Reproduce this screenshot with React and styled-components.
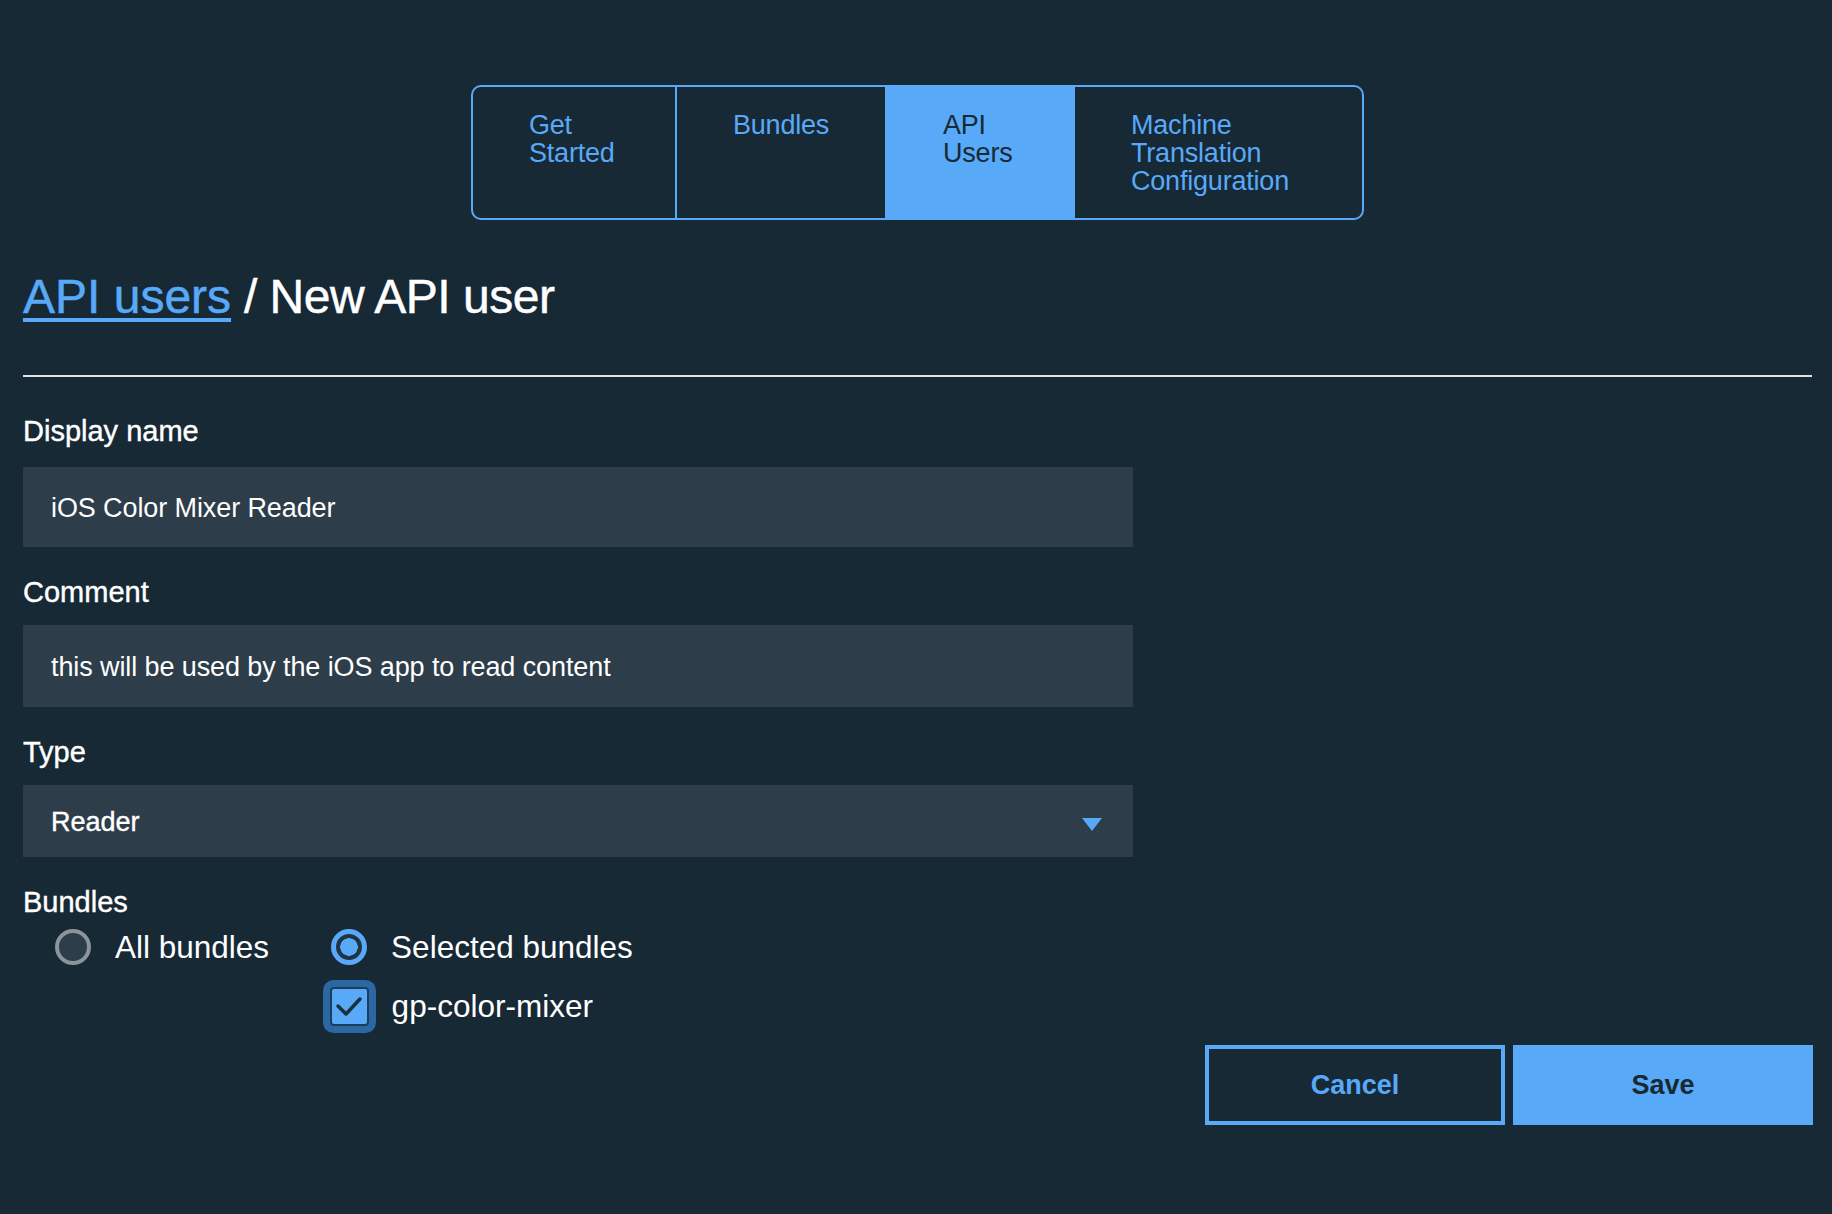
import styled, { createGlobalStyle } from "styled-components";

const BLUE = "#58a9f8";
const BG = "#172935";
const FIELD = "#2d3d4a";

const GlobalStyle = createGlobalStyle`
  html, body {
    margin: 0;
    padding: 0;
    background: ${BG};
  }
  body {
    font-family: "Liberation Sans", Arial, sans-serif;
    color: #fafafa;
  }
`;

const tabs = [
  { label: "Get\nStarted", width: 202 },
  { label: "Bundles", width: 210 },
  { label: "API\nUsers", width: 188, active: true },
  { label: "Machine\nTranslation\nConfiguration", width: 289 },
];

export default function App() {
  return (
    <>
      <GlobalStyle />
      <StyledPage>
        <StyledTabBar>
          {tabs.map((tab, i) => (
            <StyledTab key={i} $width={tab.width} $active={tab.active} $first={i === 0}>
              {tab.label}
            </StyledTab>
          ))}
        </StyledTabBar>

        <StyledHeading>
          <StyledCrumbLink href="#">API users</StyledCrumbLink> / New API user
        </StyledHeading>
        <StyledRule />

        <StyledForm>
          <StyledLabel $first>Display name</StyledLabel>
          <StyledField $height={80}>iOS Color Mixer Reader</StyledField>

          <StyledLabel>Comment</StyledLabel>
          <StyledField $height={82}>this will be used by the iOS app to read content</StyledField>

          <StyledLabel>Type</StyledLabel>
          <StyledSelect>
            <span>Reader</span>
            <StyledCaret />
          </StyledSelect>

          <StyledLabel>Bundles</StyledLabel>
          <StyledChoices>
            <StyledOption>
              <StyledRadio />
              All bundles
            </StyledOption>
            <StyledColumn>
              <StyledOption>
                <StyledRadio $checked />
                Selected bundles
              </StyledOption>
              <StyledCheckRow>
                <StyledCheckbox>
                  <svg width="28" height="22" viewBox="0 0 28 22">
                    <path
                      d="M3 11 L11 19 L25 4"
                      fill="none"
                      stroke="#1b2f3e"
                      strokeWidth="3.5"
                      strokeLinecap="round"
                      strokeLinejoin="round"
                    />
                  </svg>
                </StyledCheckbox>
                gp-color-mixer
              </StyledCheckRow>
            </StyledColumn>
          </StyledChoices>
        </StyledForm>

        <StyledActions>
          <StyledButton $variant="secondary">Cancel</StyledButton>
          <StyledButton $variant="primary">Save</StyledButton>
        </StyledActions>
      </StyledPage>
    </>
  );
}

const StyledPage = styled.div`
  padding: 85px 20px 60px 23px;
  display: flex;
  flex-direction: column;
`;

const StyledTabBar = styled.div`
  align-self: center;
  display: flex;
  border: 2px solid ${BLUE};
  border-radius: 10px;
  overflow: hidden;
`;

const StyledTab = styled.div`
  box-sizing: border-box;
  width: ${(p) => p.$width}px;
  height: 131px;
  padding: 24px 0 0 56px;
  border-left: ${(p) => (p.$first ? "none" : `2px solid ${BLUE}`)};
  background: ${(p) => (p.$active ? BLUE : "transparent")};
  color: ${(p) => (p.$active ? BG : BLUE)};
  font-size: 27px;
  line-height: 28px;
  white-space: pre-line;
  letter-spacing: -0.2px;
`;

const StyledHeading = styled.h1`
  margin: 49px 0 0;
  font-size: 48px;
  line-height: 56px;
  font-weight: 400;
  color: #ffffff;
  letter-spacing: -0.5px;
  -webkit-text-stroke: 0.5px currentColor;
`;

const StyledCrumbLink = styled.a`
  color: ${BLUE};
  letter-spacing: 0;
  text-decoration: underline;
  text-decoration-thickness: 4px;
  text-underline-offset: 5px;
`;

const StyledRule = styled.hr`
  margin: 50px 0 0;
  border: none;
  height: 2px;
  background: #e2e2e2;
`;

const StyledForm = styled.div`
  width: 1110px;
  display: flex;
  flex-direction: column;
`;

const StyledLabel = styled.div`
  margin: ${(p) => (p.$first ? "38px" : "29px")} 0 ${(p) => (p.$first ? "20px" : "17px")};
  font-size: 29px;
  line-height: 32px;
  color: #ffffff;
  -webkit-text-stroke: 0.4px #ffffff;
`;

const StyledField = styled.div`
  box-sizing: border-box;
  height: ${(p) => p.$height}px;
  padding: 2px 28px 0;
  display: flex;
  align-items: center;
  background: ${FIELD};
  font-size: 27px;
  color: #ffffff;
  letter-spacing: -0.1px;
`;

const StyledSelect = styled.div`
  box-sizing: border-box;
  height: 72px;
  padding: 2px 31px 0 28px;
  display: flex;
  align-items: center;
  justify-content: space-between;
  background: ${FIELD};
  font-size: 27px;
  color: #ffffff;
  -webkit-text-stroke: 0.4px #ffffff;
`;

const StyledCaret = styled.span`
  width: 0;
  height: 0;
  margin-top: 5px;
  border-left: 10.5px solid transparent;
  border-right: 10.5px solid transparent;
  border-top: 13px solid ${BLUE};
`;

const StyledChoices = styled.div`
  display: flex;
  gap: 62px;
  padding-left: 32px;
  margin-top: -6px;
`;

const StyledColumn = styled.div`
  display: flex;
  flex-direction: column;
`;

const StyledOption = styled.label`
  display: flex;
  align-items: center;
  gap: 24px;
  height: 36px;
  font-size: 31.5px;
  color: #ffffff;
`;

const StyledRadio = styled.span`
  box-sizing: border-box;
  width: 36px;
  height: 36px;
  border-radius: 50%;
  flex-shrink: 0;
  border: ${(p) => (p.$checked ? `5px solid ${BLUE}` : "4px solid #8b949b")};
  background: ${(p) =>
    p.$checked
      ? `radial-gradient(circle, ${BLUE} 0 8.5px, #1f3444 9px)`
      : FIELD};
`;

const StyledCheckRow = styled.label`
  display: flex;
  align-items: center;
  gap: 23px;
  margin-top: 21px;
  margin-left: -1.5px;
  height: 40px;
  font-size: 31.5px;
  color: #ffffff;
`;

const StyledCheckbox = styled.span`
  box-sizing: border-box;
  width: 39px;
  height: 39px;
  display: flex;
  align-items: center;
  justify-content: center;
  background: ${BLUE};
  border: 2px solid #1f3d5b;
  border-radius: 4px;
  box-shadow: 0 0 0 7px #2b67a2;
`;

const StyledActions = styled.div`
  display: flex;
  justify-content: flex-end;
  gap: 8px;
  margin-top: 19px;
  margin-right: -1px;
`;

const StyledButton = styled.button`
  box-sizing: border-box;
  width: 300px;
  height: 80px;
  font-family: "Liberation Sans", Arial, sans-serif;
  font-size: 27px;
  font-weight: 700;
  border: 4px solid ${BLUE};
  border-radius: 0;
  background: ${(p) => (p.$variant === "primary" ? BLUE : "transparent")};
  color: ${(p) => (p.$variant === "primary" ? BG : BLUE)};
  cursor: pointer;
`;
